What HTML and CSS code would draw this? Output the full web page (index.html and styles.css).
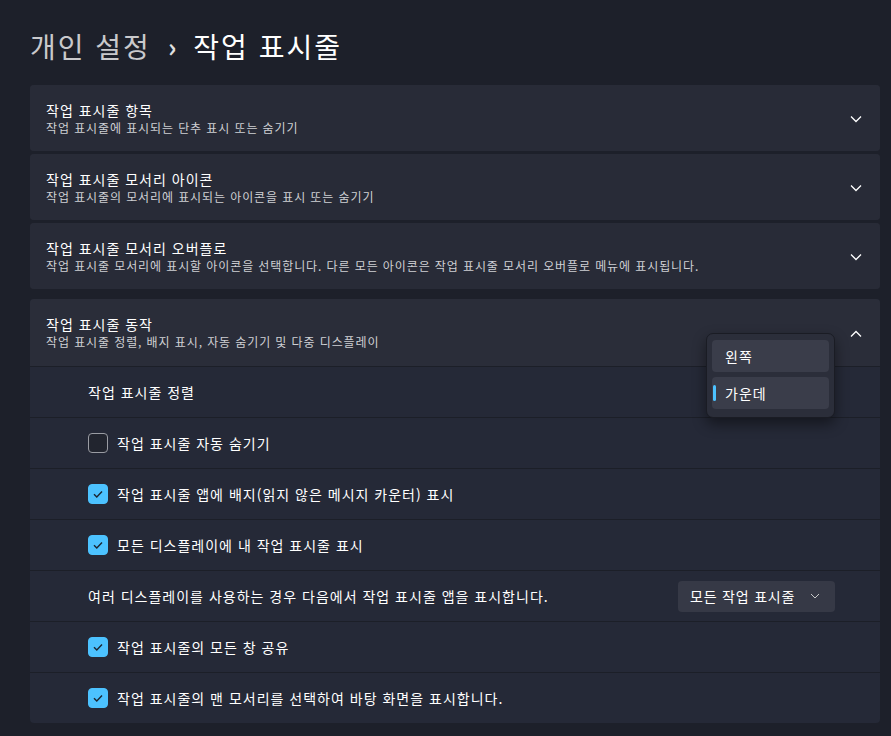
FILE: index.html
```html
<!DOCTYPE html>
<html lang="ko">
<head>
    <meta charset="UTF-8">
    <meta name="viewport" content="width=device-width, initial-scale=1.0">
    <title>작업 표시줄</title>
    <link rel="stylesheet" href="styles.css">
</head>
<body>
    <h1 class="crumbs"><span class="parent">개인 설정</span><span class="sep">›</span><span class="current">작업 표시줄</span></h1>

    <div class="card">
        <div class="card-head">
            <div class="head-text">
                <div class="head-title">작업 표시줄 항목</div>
                <div class="head-sub">작업 표시줄에 표시되는 단추 표시 또는 숨기기</div>
            </div>
            <svg class="chev" width="12" height="8" viewBox="0 0 12 8"><path d="M1 1.5 L6 6.5 L11 1.5" fill="none" stroke="#fff" stroke-width="1.3"/></svg>
        </div>
    </div>

    <div class="card">
        <div class="card-head">
            <div class="head-text">
                <div class="head-title">작업 표시줄 모서리 아이콘</div>
                <div class="head-sub">작업 표시줄의 모서리에 표시되는 아이콘을 표시 또는 숨기기</div>
            </div>
            <svg class="chev" width="12" height="8" viewBox="0 0 12 8"><path d="M1 1.5 L6 6.5 L11 1.5" fill="none" stroke="#fff" stroke-width="1.3"/></svg>
        </div>
    </div>

    <div class="card">
        <div class="card-head">
            <div class="head-text">
                <div class="head-title">작업 표시줄 모서리 오버플로</div>
                <div class="head-sub">작업 표시줄 모서리에 표시할 아이콘을 선택합니다. 다른 모든 아이콘은 작업 표시줄 모서리 오버플로 메뉴에 표시됩니다.</div>
            </div>
            <svg class="chev" width="12" height="8" viewBox="0 0 12 8"><path d="M1 1.5 L6 6.5 L11 1.5" fill="none" stroke="#fff" stroke-width="1.3"/></svg>
        </div>
    </div>

    <div class="card open">
        <div class="card-head tall">
            <div class="head-text">
                <div class="head-title">작업 표시줄 동작</div>
                <div class="head-sub">작업 표시줄 정렬, 배지 표시, 자동 숨기기 및 다중 디스플레이</div>
            </div>
            <svg class="chev" width="12" height="8" viewBox="0 0 12 8"><path d="M1 6.5 L6 1.5 L11 6.5" fill="none" stroke="#fff" stroke-width="1.3"/></svg>
        </div>

        <div class="row">
            <span class="row-label">작업 표시줄 정렬</span>
        </div>
        <div class="row">
            <span class="box"></span>
            <span class="row-label">작업 표시줄 자동 숨기기</span>
        </div>
        <div class="row">
            <span class="box checked"><svg width="12" height="10" viewBox="0 0 12 10"><path d="M2 5.2 L4.8 8 L10 2.5" fill="none" stroke="#1c2530" stroke-width="1.4"/></svg></span>
            <span class="row-label">작업 표시줄 앱에 배지(읽지 않은 메시지 카운터) 표시</span>
        </div>
        <div class="row">
            <span class="box checked"><svg width="12" height="10" viewBox="0 0 12 10"><path d="M2 5.2 L4.8 8 L10 2.5" fill="none" stroke="#1c2530" stroke-width="1.4"/></svg></span>
            <span class="row-label">모든 디스플레이에 내 작업 표시줄 표시</span>
        </div>
        <div class="row spread">
            <span class="row-label">여러 디스플레이를 사용하는 경우 다음에서 작업 표시줄 앱을 표시합니다.</span>
            <div class="combo">
                <span>모든 작업 표시줄</span>
                <svg width="10" height="6" viewBox="0 0 10 6"><path d="M1 1 L5 5 L9 1" fill="none" stroke="#c8c8c8" stroke-width="1"/></svg>
            </div>
        </div>
        <div class="row">
            <span class="box checked"><svg width="12" height="10" viewBox="0 0 12 10"><path d="M2 5.2 L4.8 8 L10 2.5" fill="none" stroke="#1c2530" stroke-width="1.4"/></svg></span>
            <span class="row-label">작업 표시줄의 모든 창 공유</span>
        </div>
        <div class="row">
            <span class="box checked"><svg width="12" height="10" viewBox="0 0 12 10"><path d="M2 5.2 L4.8 8 L10 2.5" fill="none" stroke="#1c2530" stroke-width="1.4"/></svg></span>
            <span class="row-label">작업 표시줄의 맨 모서리를 선택하여 바탕 화면을 표시합니다.</span>
        </div>

        <div class="popup">
            <div class="opt">왼쪽</div>
            <div class="opt selected">가운데</div>
        </div>
    </div>
</body>
</html>
```

FILE: styles.css
```css
body{
    margin: 0;
    padding: 0 11px 0 30px;
    background-color: #1d202a;
    color: #fff;
    font-family: "Noto Sans CJK KR", "Noto Sans", sans-serif;
}

.crumbs{
    margin: 0;
    padding: 24px 0 17px 0;
    height: 44px;
    font-size: 28px;
    font-weight: 400;
    line-height: 44px;
    letter-spacing: 2px;
    display: flex;
    align-items: center;
}
.parent{
    color: #c9c9cc;
}
.sep{
    color: #e0e0e0;
    font-size: 26px;
    font-weight: 700;
    letter-spacing: 0;
    margin: 0 17px 0 17px;
}
.current{
    color: #fff;
}

.card{
    background-color: #282b37;
    border-radius: 4px;
    margin-bottom: 3px;
}
.card.open{
    position: relative;
    margin-top: 10px;
    background-color: #252937;
}

.card-head{
    height: 66px;
    padding: 0 18px 0 16px;
    display: flex;
    align-items: center;
    justify-content: space-between;
    background-color: #282b37;
    border-radius: 4px;
}
.card-head.tall{
    height: 67px;
    border-radius: 4px 4px 0 0;
    background-color: #2a2d39;
}
.head-title{
    font-size: 14px;
    line-height: 19px;
    letter-spacing: 1px;
    color: #fff;
}
.head-sub{
    font-size: 12px;
    line-height: 16px;
    letter-spacing: 0.9px;
    color: #cfd0d4;
}
.chev{
    display: block;
    margin-top: 2px;
}

.row{
    height: 50px;
    border-top: 1px solid #1c1f28;
    display: flex;
    align-items: center;
    padding: 0 45px 0 58px;
    gap: 9px;
}
.row.spread{
    justify-content: space-between;
}
.row-label{
    font-size: 14px;
    letter-spacing: 1px;
    color: #fff;
    white-space: nowrap;
}

.box{
    width: 18px;
    height: 18px;
    border: 1px solid #9a9ca3;
    border-radius: 4px;
    background-color: #22252f;
    display: flex;
    align-items: center;
    justify-content: center;
}
.box.checked{
    border-color: #4cc2ff;
    background-color: #4cc2ff;
}

.combo{
    flex-shrink: 0;
    width: 157px;
    height: 31px;
    box-sizing: border-box;
    background-color: #363946;
    border-radius: 4px;
    display: flex;
    align-items: center;
    justify-content: space-between;
    padding: 0 15px 0 12px;
    font-size: 14px;
    letter-spacing: 0.8px;
    white-space: nowrap;
}

.popup{
    position: absolute;
    left: 676px;
    top: 34px;
    width: 129px;
    height: 85px;
    box-sizing: border-box;
    padding: 6px 5px;
    background-color: #2b2e3a;
    border: 1px solid #1a1c24;
    border-radius: 7px;
    box-shadow: 0 6px 14px rgba(0,0,0,0.45);
    display: flex;
    flex-direction: column;
    gap: 5px;
}
.opt{
    position: relative;
    height: 32px;
    border-radius: 4px;
    background-color: #3a3d4a;
    font-size: 14px;
    letter-spacing: 1px;
    display: flex;
    align-items: center;
    padding-left: 13px;
}
.opt.selected::before{
    content: "";
    position: absolute;
    left: 1px;
    top: 8px;
    width: 3px;
    height: 16px;
    border-radius: 2px;
    background-color: #4cc2ff;
}
```
